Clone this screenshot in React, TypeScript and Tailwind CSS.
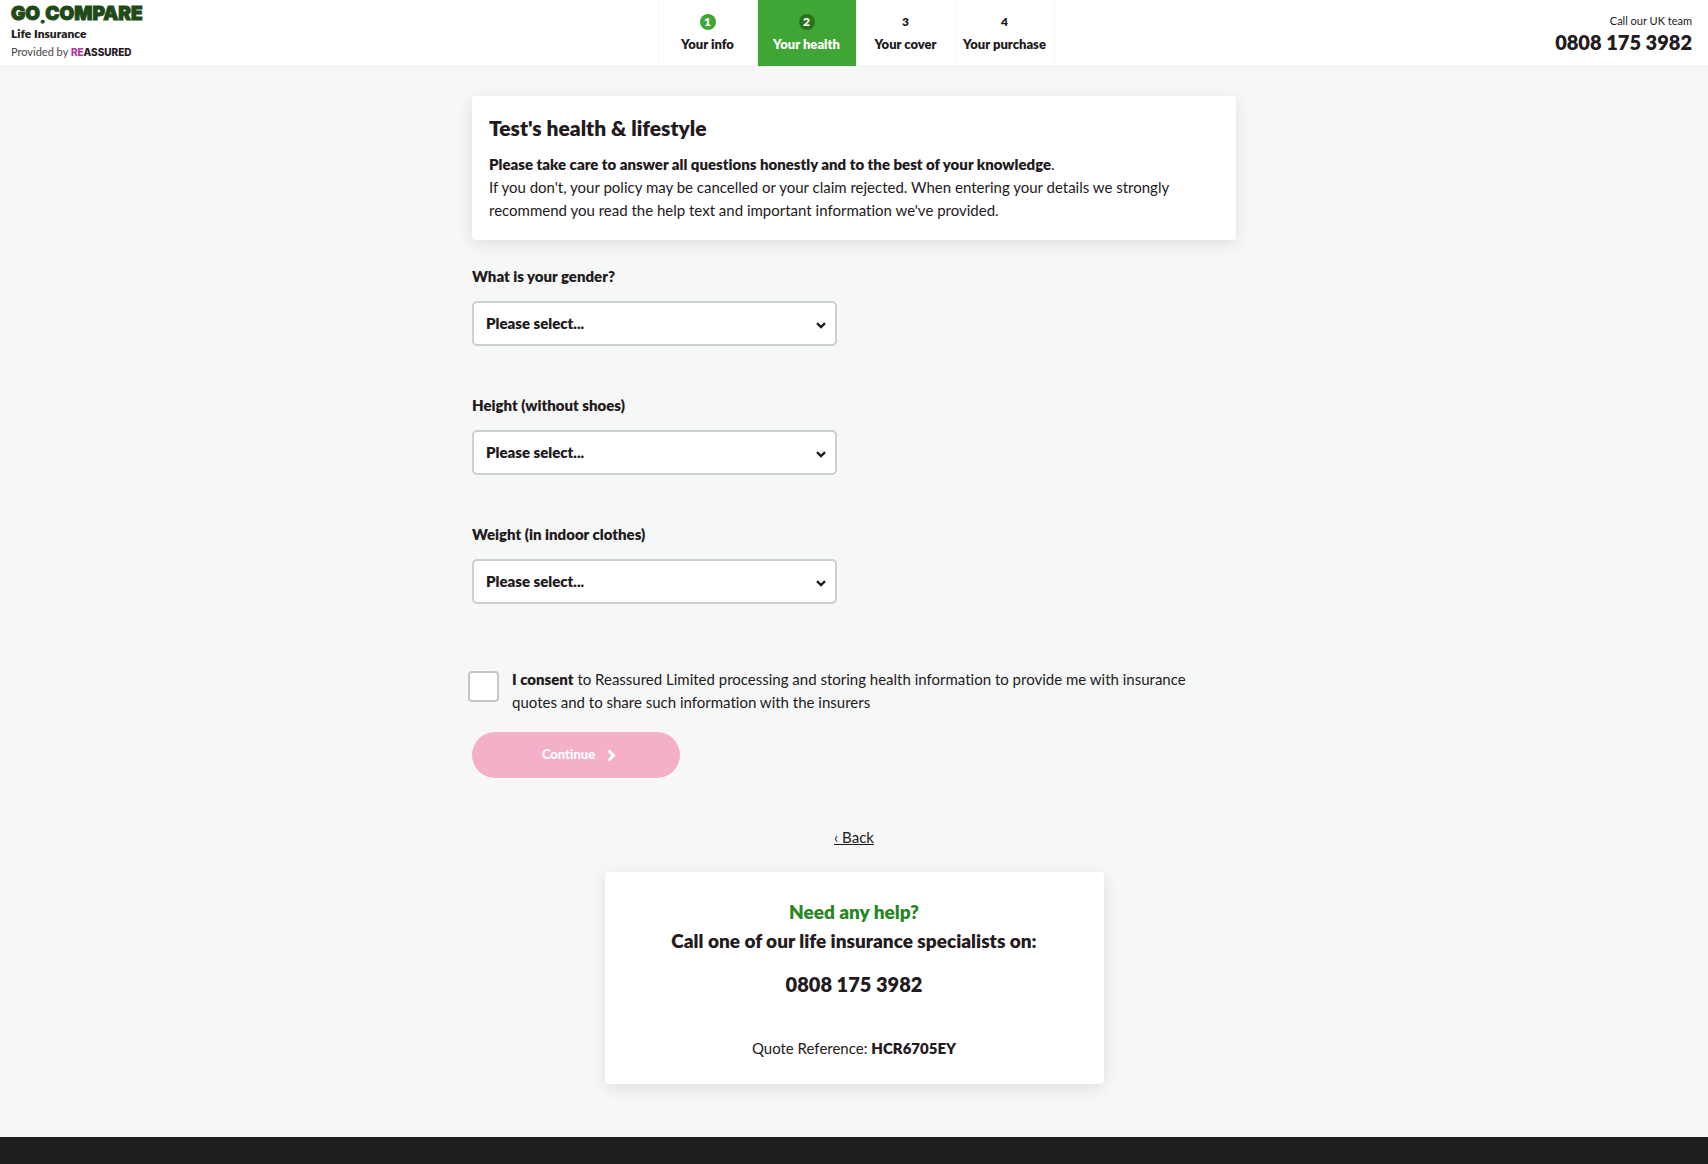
import { useState } from "react";

const steps = [
  { number: 1, label: "Your info", state: "done" },
  { number: 2, label: "Your health", state: "active" },
  { number: 3, label: "Your cover", state: "todo" },
  { number: 4, label: "Your purchase", state: "todo" },
];

const stepStyles: Record<string, string> = {
  done: "bg-white",
  active: "bg-[#3fa535] text-white",
  todo: "bg-white",
};

const badgeStyles: Record<string, string> = {
  done: "bg-[#3fa535] text-white",
  active: "bg-[#27731f] text-white",
  todo: "",
};

const questions = [
  { id: "gender", label: "What is your gender?", options: ["Male", "Female"] },
  { id: "height", label: "Height (without shoes)", options: ["Feet and inches", "Centimetres"] },
  { id: "weight", label: "Weight (in indoor clothes)", options: ["Stones and pounds", "Kilograms"] },
];

function Header() {
  return (
    <header className="grid grid-cols-[1fr_auto_1fr] border-b border-[#eceeee] bg-white">
      <div className="flex flex-col pt-1 pl-[11px]">
        <a
          href="#"
          className="h-5 font-['Inter',sans-serif] text-[19px] leading-5 font-black text-[#1f4a17] [-webkit-text-stroke:1px_#1f4a17]"
        >
          GO<span className="align-[-3px] text-sm leading-none">.</span>COMPARE
        </a>
        <span className="text-xs leading-5 font-extrabold">Life Insurance</span>
        <span className="text-[11px] leading-4 text-[#4a4547]">
          Provided by{" "}
          <b className="font-['Inter',sans-serif] text-[10px] font-extrabold text-[#231a1d]">
            <span className="text-[#b535a5]">RE</span>ASSURED
          </b>
        </span>
      </div>

      <ol className="ml-1 flex border-l border-[#f7f8f8]">
        {steps.map((step) => (
          <li
            key={step.number}
            className={`flex h-[66px] w-[99px] flex-col items-center gap-1 border-r border-[#f7f8f8] pt-[14px] text-[13px] font-extrabold ${stepStyles[step.state]}`}
          >
            <span
              className={`flex h-4 w-4 items-center justify-center rounded-full text-xs leading-4 ${badgeStyles[step.state]}`}
            >
              {step.number}
            </span>
            <span className="leading-5 whitespace-nowrap">{step.label}</span>
          </li>
        ))}
      </ol>

      <div className="flex flex-col items-end pt-3 pr-4">
        <span className="text-[11px] leading-[18px]">Call our UK team</span>
        <a href="tel:08081753982" className="text-[20px] leading-6 font-extrabold">
          0808 175 3982
        </a>
      </div>
    </header>
  );
}

function SelectField({ id, label, options }: { id: string; label: string; options: string[] }) {
  return (
    <div className="flex flex-col">
      <label htmlFor={id} className="text-[15px] leading-6 font-extrabold">
        {label}
      </label>
      <div className="relative mt-[13px] w-[365px] max-w-full">
        <select
          id={id}
          defaultValue=""
          className="h-[45px] w-full appearance-none rounded-[5px] border-2 border-[#cbd0cf] bg-white px-3 text-[15px] font-extrabold"
        >
          <option value="">Please select...</option>
          {options.map((option) => (
            <option key={option}>{option}</option>
          ))}
        </select>
        <svg
          viewBox="0 0 10 7"
          className="pointer-events-none absolute top-[21px] right-[11px] h-[7px] w-[10px]"
          fill="none"
          stroke="#231a1d"
          strokeWidth="2.4"
        >
          <path d="M1 1.2 L5 5 L9 1.2" />
        </svg>
      </div>
    </div>
  );
}

export default function App() {
  const [consent, setConsent] = useState(false);

  return (
    <div className="flex min-h-screen flex-col bg-[#f6f8f7] font-['Lato',sans-serif] text-[#231a1d] [font-variant-ligatures:none]">
      <Header />

      <main className="mx-auto flex w-full max-w-[764px] flex-col pt-[29px] pb-[53px]">
        <section className="rounded-[4px] bg-white px-[17px] pt-5 pb-4 shadow-[0_4px_16px_rgba(0,0,0,0.1)]">
          <h1 className="text-[21px] leading-6 font-extrabold">Test's health &amp; lifestyle</h1>
          <p className="mt-[13px] mr-8 pb-0.5 text-[15px] leading-[23px]">
            <b className="font-extrabold">
              Please take care to answer all questions honestly and to the best of your knowledge
            </b>
            .
            <br />
            If you don't, your policy may be cancelled or your claim rejected. When entering your details we strongly
            recommend you read the help text and important information we've provided.
          </p>
        </section>

        <form className="mt-6 flex flex-col" onSubmit={(e) => e.preventDefault()}>
          <div className="flex flex-col gap-[47px]">
            {questions.map((question) => (
              <SelectField key={question.id} {...question} />
            ))}
          </div>

          <div className="mt-16 -ml-1 flex gap-[13px]">
            <input
              id="consent"
              type="checkbox"
              checked={consent}
              onChange={(e) => setConsent(e.target.checked)}
              className="mt-[3px] h-[31px] w-[31px] shrink-0 appearance-none rounded-[4px] border-2 border-[#c6c8c8] bg-white checked:bg-[#3fa535]"
            />
            <label htmlFor="consent" className="mr-10 text-[15px] leading-[23px]">
              <b className="font-extrabold">I consent</b>
              <span>
                {" "}
                to Reassured Limited processing and storing health information to provide me with insurance quotes and
                to share such information with the insurers
              </span>
            </label>
          </div>

          <button
            type="submit"
            className="mt-[18px] flex h-[46px] w-[208px] items-center justify-center gap-3 rounded-full bg-[#f5b0c9] pl-1.5 text-[13px] font-black text-white"
          >
            Continue
            <svg viewBox="0 0 9 13" className="h-[13px] w-[9px]" fill="none" stroke="currentColor" strokeWidth="3">
              <path d="M1.5 1.5 L6.5 6.5 L1.5 11.5" />
            </svg>
          </button>
        </form>

        <a href="#" className="mt-[47px] self-center text-[15px] leading-6 underline">
          ‹ Back
        </a>

        <section className="mt-[23px] flex w-[499px] max-w-full flex-col items-center self-center rounded-[4px] bg-white px-4 pt-[26px] pb-6 shadow-[0_4px_16px_rgba(0,0,0,0.1)]">
          <h2 className="text-[19px] leading-7 font-extrabold text-[#27861f]">Need any help?</h2>
          <p className="text-[19px] leading-[30px] font-extrabold">Call one of our life insurance specialists on:</p>
          <a href="tel:08081753982" className="mt-3 text-[20px] leading-8 font-extrabold">
            0808 175 3982
          </a>
          <p className="mt-9 text-[15px] leading-6">
            Quote Reference: <b className="font-extrabold">HCR6705EY</b>
          </p>
        </section>
      </main>

      <footer className="min-h-7 grow bg-[#1e1e1e]" />
    </div>
  );
}
